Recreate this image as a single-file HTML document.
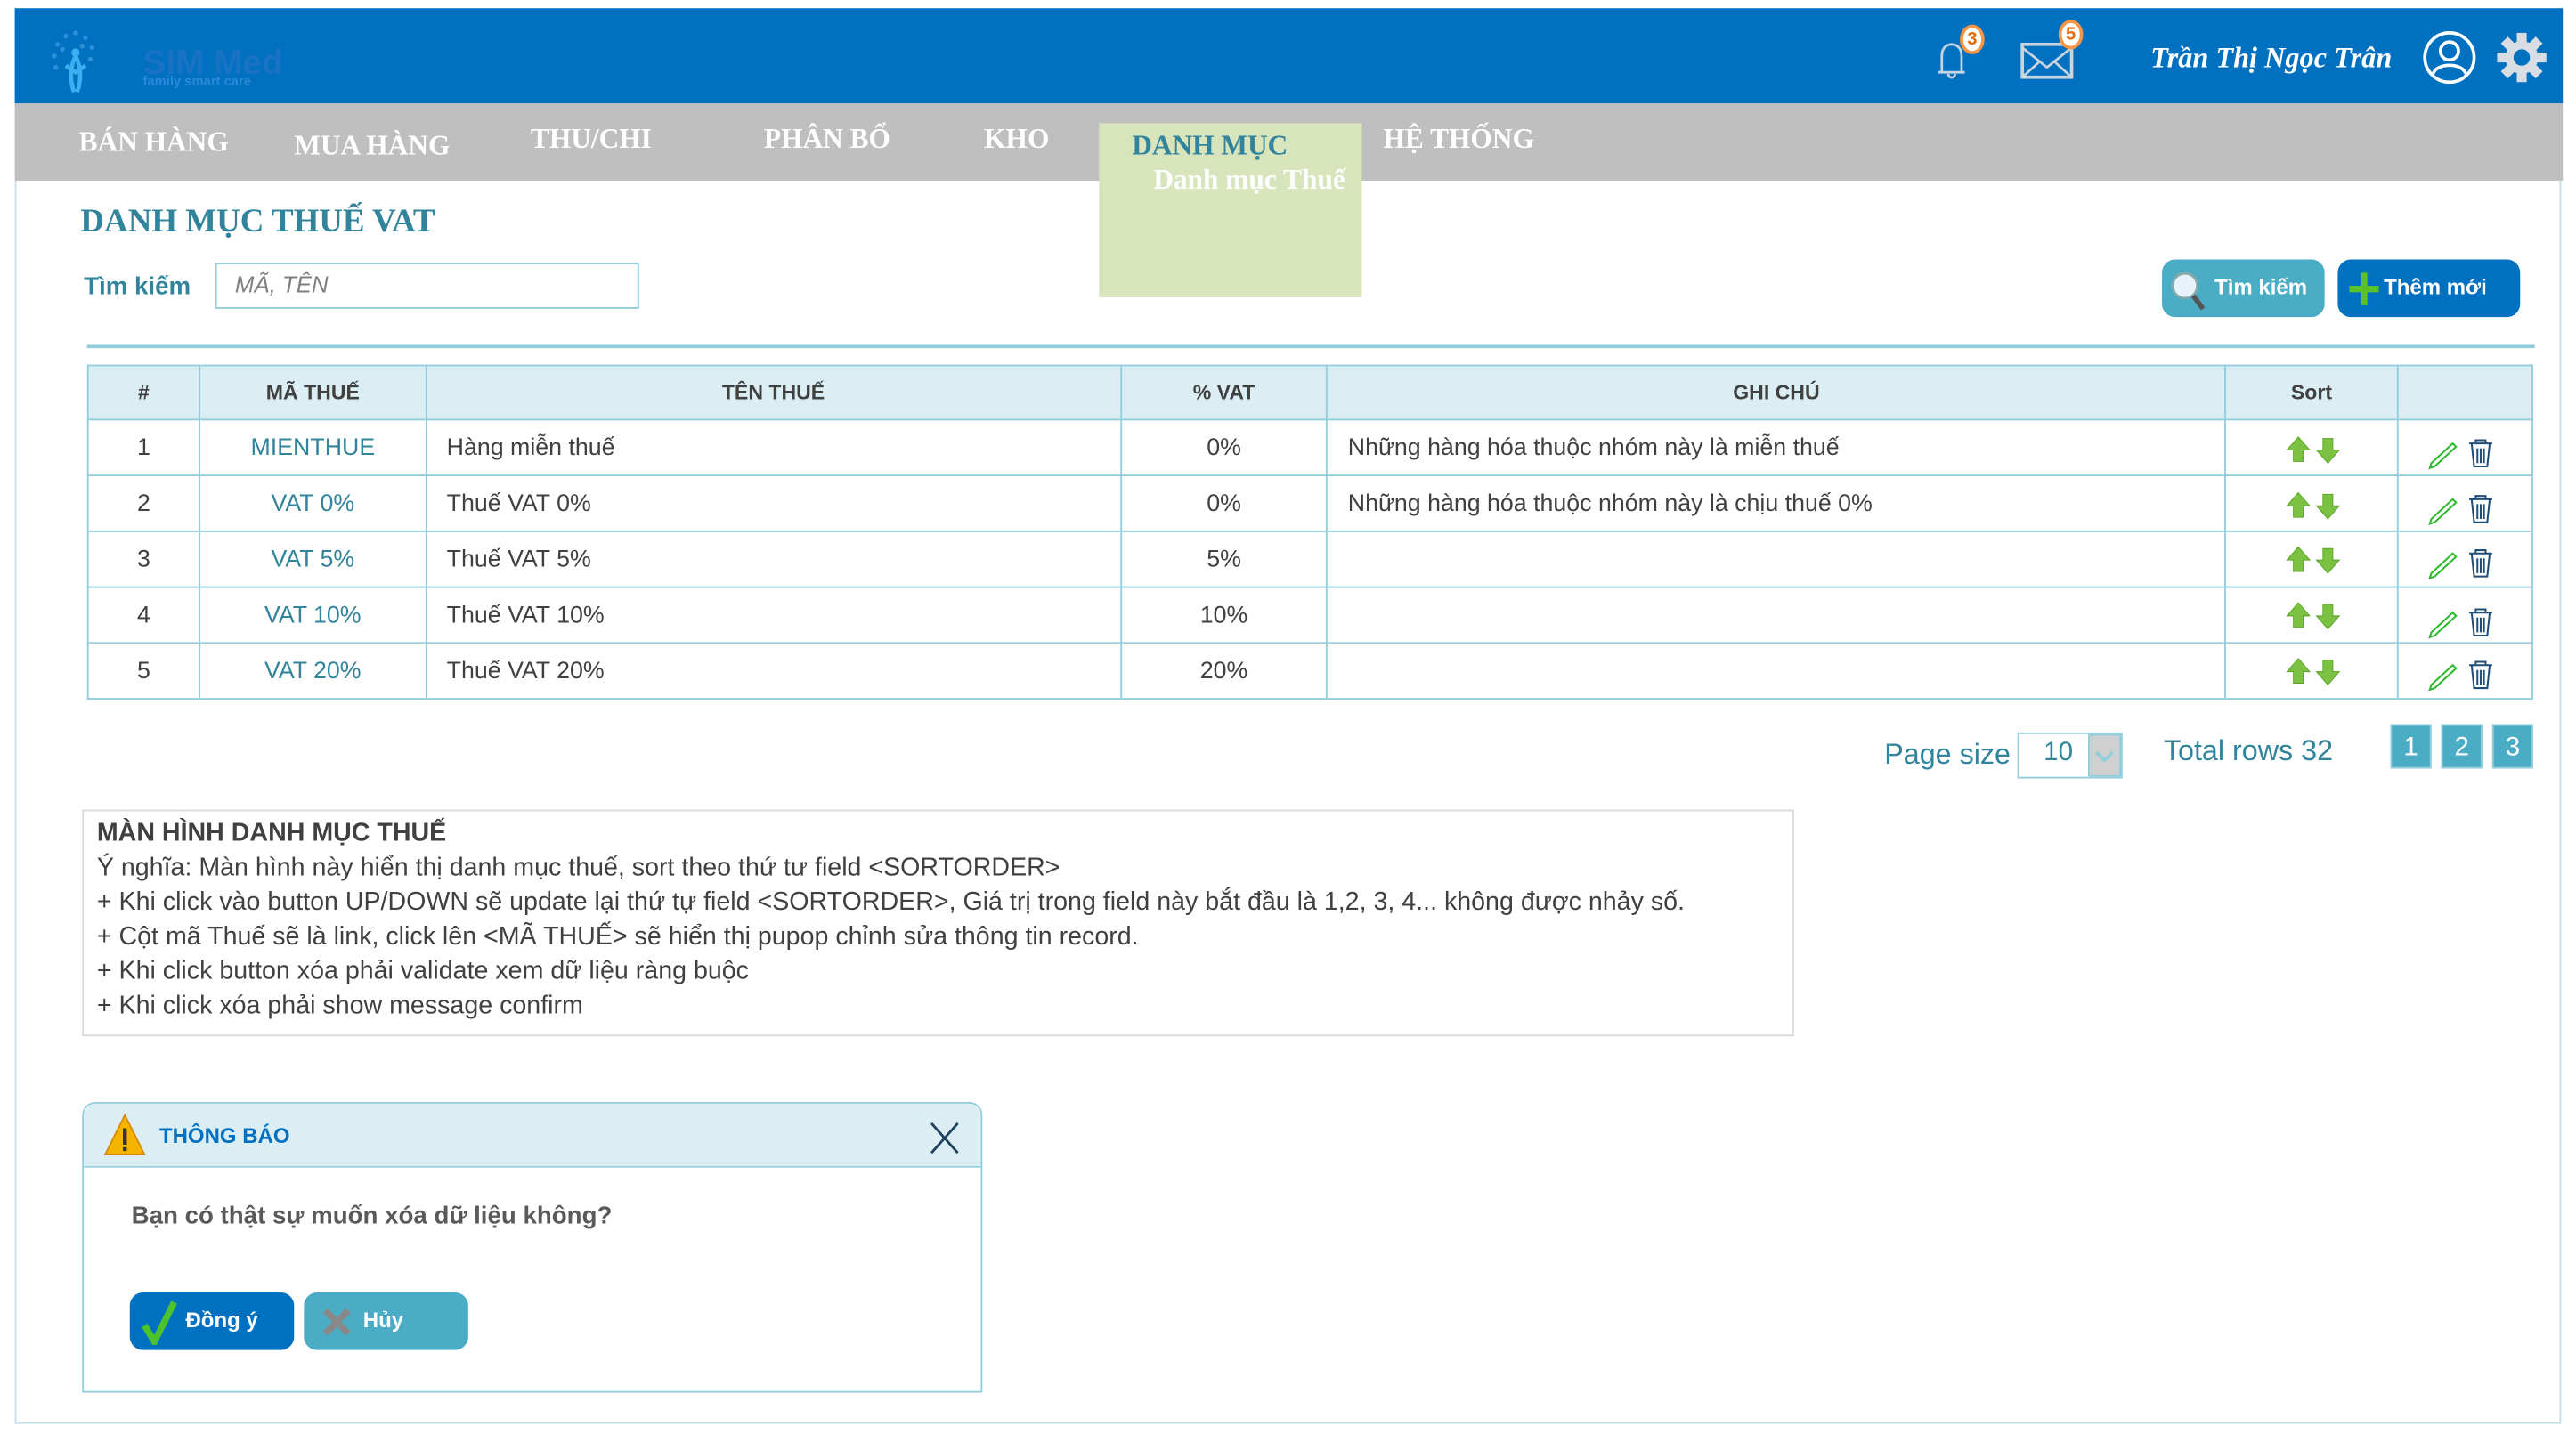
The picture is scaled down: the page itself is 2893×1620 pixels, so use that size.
<!DOCTYPE html>
<html><head><meta charset="utf-8"><style>
*{margin:0;padding:0;box-sizing:border-box}
html,body{width:2893px;height:1620px;overflow:hidden;background:#fff}
#w{position:absolute;left:0;top:0;width:1568px;height:878px;transform:scale(1.845);transform-origin:0 0;font-family:"Liberation Sans","DejaVu Sans",sans-serif}
.a{position:absolute;white-space:nowrap}
.nav{font-family:"Liberation Serif",serif;font-weight:bold;font-size:17px;color:#fff}
table{border-collapse:collapse;position:absolute;left:53px;top:222px;width:1489px;font-size:14.5px;color:#404040}
td,th{border:1px solid #92cddc;height:34px;padding:0 12px}
th{background:#daeef3;height:33px;font-size:12.5px;color:#404040;font-weight:bold;text-align:center}
.c{text-align:center}.lk{color:#31849b;text-align:center}
.btn{position:absolute;border-radius:8px;color:#fff;font-weight:bold;font-size:13px}
.note{font-size:15.5px;color:#404040;line-height:21px}
.pg{position:absolute;top:441px;width:25px;height:27px;background:#4bacc6;color:#fff;font-size:16px;text-align:center;line-height:27px;border:1px solid #92cddc}
</style></head><body><div id="w">
<div class="a" style="left:9px;top:5px;width:1550px;height:862px;border:1px solid #c8dfe6;border-top:none"></div>
<div class="a" style="left:9px;top:5px;width:1551px;height:58px;background:#0070c0"></div>
<div class="a" style="left:9px;top:63px;width:1551px;height:47px;background:#bfbfbf"></div>
<svg class="a" style="left:26px;top:12px" width="60" height="46" viewBox="0 0 60 46"><g fill="#2b8fd8"><circle cx="9" cy="15" r="1.5"/><circle cx="14" cy="10" r="1.5"/><circle cx="20" cy="8" r="1.5"/><circle cx="26" cy="11" r="1.5"/><circle cx="7" cy="22" r="1.5"/><circle cx="30" cy="17" r="1.5"/><circle cx="12" cy="18" r="1.5"/><circle cx="24" cy="16" r="1.5"/><circle cx="29" cy="24" r="1.5"/><circle cx="8" cy="29" r="1.5"/></g><path d="M20 22 C16 30 17 38 19 44 M20 22 C24 30 23 38 21 44 M14 28 L20 32 L26 28" stroke="#3ab0f0" stroke-width="2.5" fill="none"/><circle cx="20" cy="20" r="2.5" fill="#3ab0f0"/></svg>
<div class="a" style="left:87px;top:27px;font-size:21px;font-weight:bold;color:#1a72c4">SIM Med</div>
<div class="a" style="left:87px;top:45px;font-size:8px;font-weight:bold;color:#2a8ad8">family smart care</div>
<svg class="a" style="left:1178px;top:22px" width="24" height="28" viewBox="0 0 24 28"><path d="M4 22 L4 12 C4 7 7 5 10 5 C13 5 16 7 16 12 L16 22 Z M2 22 L18 22 M8 23 C8 26 12 26 12 23" stroke="#c8d4e0" stroke-width="1.5" fill="none"/></svg>
<div class="a" style="left:1193px;top:15px;width:15px;height:18px;border-radius:50%;background:#fff;border:2px solid #f79646;color:#e46c0a;font-size:11px;font-weight:bold;text-align:center;line-height:14px">3</div>
<svg class="a" style="left:1229px;top:25px" width="36" height="24" viewBox="0 0 36 24"><rect x="2" y="2" width="30" height="20" stroke="#c8d4e0" stroke-width="2" fill="none"/><path d="M2 4 L17 16 L32 4 M2 22 L13 12 M32 22 L21 12" stroke="#c8d4e0" stroke-width="1.5" fill="none"/></svg>
<div class="a" style="left:1253px;top:12px;width:15px;height:18px;border-radius:50%;background:#fff;border:2px solid #f79646;color:#e46c0a;font-size:11px;font-weight:bold;text-align:center;line-height:14px">5</div>
<div class="a" style="left:1309px;top:25px;font-family:'Liberation Serif',serif;font-style:italic;font-weight:bold;font-size:17.5px;color:#fff">Trần Thị Ngọc Trân</div>
<svg class="a" style="left:1474px;top:18px" width="34" height="34" viewBox="0 0 34 34"><circle cx="17" cy="17" r="15" stroke="#fff" stroke-width="2" fill="none"/><circle cx="17" cy="13" r="5.5" stroke="#fff" stroke-width="2" fill="none"/><path d="M7 27 C9 20 25 20 27 27" stroke="#fff" stroke-width="2" fill="none"/></svg>
<svg class="a" style="left:1519px;top:19px" width="32" height="32" viewBox="-16 -16 32 32"><g fill="#d8dde3"><circle r="10"/><g id="t"><rect x="-3" y="-15" width="6" height="8"/></g><use href="#t" transform="rotate(45)"/><use href="#t" transform="rotate(90)"/><use href="#t" transform="rotate(135)"/><use href="#t" transform="rotate(180)"/><use href="#t" transform="rotate(225)"/><use href="#t" transform="rotate(270)"/><use href="#t" transform="rotate(315)"/></g><circle r="5" fill="#0070c0"/></svg>
<div class="a nav" style="left:48px;top:77px">BÁN HÀNG</div>
<div class="a nav" style="left:179px;top:79px">MUA HÀNG</div>
<div class="a nav" style="left:323px;top:75px">THU/CHI</div>
<div class="a nav" style="left:465px;top:75px">PHÂN BỔ</div>
<div class="a nav" style="left:599px;top:75px">KHO</div>
<div class="a" style="left:669px;top:75px;width:160px;height:106px;background:#d8e4bc"></div>
<div class="a nav" style="left:689px;top:79px;color:#31849b">DANH MỤC</div>
<div class="a nav" style="left:702px;top:100px">Danh mục Thuế</div>
<div class="a nav" style="left:842px;top:75px">HỆ THỐNG</div>
<div class="a" style="left:49px;top:124px;font-family:'Liberation Serif',serif;font-weight:bold;font-size:20px;color:#31849b">DANH MỤC THUẾ VAT</div>
<div class="a" style="left:51px;top:166px;font-size:15px;font-weight:bold;color:#31849b">Tìm kiếm</div>
<div class="a" style="left:131px;top:160px;width:258px;height:28px;border:1px solid #92cddc"></div>
<div class="a" style="left:143px;top:165px;font-size:14px;font-style:italic;color:#808080">MÃ, TÊN</div>
<div class="btn" style="left:1316px;top:158px;width:99px;height:35px;background:#4bacc6"><svg class="a" style="left:4px;top:6px" width="24" height="26" viewBox="0 0 24 26"><circle cx="10" cy="10" r="7.5" fill="#e8f2fb" stroke="#8aa" stroke-width="1.5"/><path d="M15 16 L21 24" stroke="#555" stroke-width="3"/></svg><span class="a" style="left:32px;top:9px">Tìm kiếm</span></div>
<div class="btn" style="left:1423px;top:158px;width:111px;height:35px;background:#0070c0"><svg class="a" style="left:7px;top:8px" width="18" height="20" viewBox="0 0 18 20"><path d="M7 0h4v8h7v4h-7v8h-4v-8h-7v-4h7z" fill="#5cc02a"/></svg><span class="a" style="left:28px;top:9px">Thêm mới</span></div>
<div class="a" style="left:53px;top:210px;width:1490px;height:2px;background:#92cddc"></div>
<table>
<tr><th style="width:68px">#</th><th style="width:138px">MÃ THUẾ</th><th style="width:423px">TÊN THUẾ</th><th style="width:126px">% VAT</th><th style="width:547px">GHI CHÚ</th><th style="width:105px">Sort</th><th style="width:82px"></th></tr>
<tr><td class="c">1</td><td class="lk">MIENTHUE</td><td>Hàng miễn thuế</td><td class="c">0%</td><td>Những hàng hóa thuộc nhóm này là miễn thuế</td><td></td><td></td></tr>
<tr><td class="c">2</td><td class="lk">VAT 0%</td><td>Thuế VAT 0%</td><td class="c">0%</td><td>Những hàng hóa thuộc nhóm này là chịu thuế 0%</td><td></td><td></td></tr>
<tr><td class="c">3</td><td class="lk">VAT 5%</td><td>Thuế VAT 5%</td><td class="c">5%</td><td></td><td></td><td></td></tr>
<tr><td class="c">4</td><td class="lk">VAT 10%</td><td>Thuế VAT 10%</td><td class="c">10%</td><td></td><td></td><td></td></tr>
<tr><td class="c">5</td><td class="lk">VAT 20%</td><td>Thuế VAT 20%</td><td class="c">20%</td><td></td><td></td><td></td></tr>
</table>
<svg class="a" style="left:1390px;top:262px" width="150" height="160" viewBox="0 0 150 160">
<defs><g id="ud"><path d="M9 0 L16 8 L12 8 L12 15 L6 15 L6 8 L2 8 Z" fill="#7cc242" stroke="#5aa028" stroke-width="0.5"/><path d="M27 16 L34 8 L30 8 L30 1 L24 1 L24 8 L20 8 Z" fill="#7cc242" stroke="#5aa028" stroke-width="0.5"/></g>
<g id="ed"><path d="M90 17 L103 5 L105 7 L92 19 L89 20 Z" fill="none" stroke="#2cb82c" stroke-width="1.1"/><path d="M113 5 h14 M117 5 v-2 h6 v2 M114.5 5 l1.5 14 h8 l1.5 -14 M118 8 v9 M120 8 v9 M122 8 v9" fill="none" stroke="#1f4e79" stroke-width="1.1"/></g></defs>
<use href="#ud" y="4"/><use href="#ed" y="3"/>
<use href="#ud" y="38"/><use href="#ed" y="37"/>
<use href="#ud" y="71"/><use href="#ed" y="70"/>
<use href="#ud" y="105"/><use href="#ed" y="106"/>
<use href="#ud" y="139"/><use href="#ed" y="138"/>
</svg>
<div class="a" style="left:1147px;top:449px;font-size:17.5px;color:#31849b">Page size</div>
<div class="a" style="left:1228px;top:446px;width:64px;height:28px;border:1px solid #92cddc"></div>
<div class="a" style="left:1244px;top:450px;font-size:16px;color:#31849b">10</div>
<div class="a" style="left:1271px;top:447px;width:20px;height:26px;background:#d0d0d0;border:1px solid #92cddc"><svg width="18" height="24"><path d="M4 10 L9 15 L14 10" stroke="#92cddc" stroke-width="2" fill="none"/></svg></div>
<div class="a" style="left:1317px;top:447px;font-size:17.5px;color:#31849b">Total rows 32</div>
<div class="pg" style="left:1455px">1</div><div class="pg" style="left:1486px">2</div><div class="pg" style="left:1517px">3</div>
<div class="a" style="left:50px;top:493px;width:1042px;height:138px;border:1px solid #d9d9d9"></div>
<div class="a note" style="left:59px;top:497px"><b>MÀN HÌNH DANH MỤC THUẾ</b><br>Ý nghĩa: Màn hình này hiển thị danh mục thuế, sort theo thứ tư field &lt;SORTORDER&gt;<br>+ Khi click vào button UP/DOWN sẽ update lại thứ tự field &lt;SORTORDER&gt;, Giá trị trong field này bắt đầu là 1,2, 3, 4... không được nhảy số.<br>+ Cột mã Thuế sẽ là link, click lên &lt;MÃ THUẾ&gt; sẽ hiển thị pupop chỉnh sửa thông tin record.<br>+ Khi click button xóa phải validate xem dữ liệu ràng buộc<br>+ Khi click xóa phải show message confirm</div>
<div class="a" style="left:50px;top:671px;width:548px;height:177px;border:1px solid #92cddc;border-radius:8px 8px 0 0"></div>
<div class="a" style="left:51px;top:672px;width:546px;height:39px;background:#daeef3;border-bottom:1px solid #92cddc;border-radius:8px 8px 0 0"></div>
<svg class="a" style="left:62px;top:677px" width="28" height="28" viewBox="0 0 28 28"><path d="M14 2 L26 26 L2 26 Z" fill="#f5b400" stroke="#d98a00"/><rect x="12.8" y="10" width="2.4" height="10" fill="#333"/><rect x="12.8" y="21.5" width="2.4" height="2.4" fill="#333"/></svg>
<div class="a" style="left:97px;top:684px;font-size:13px;font-weight:bold;color:#0070c0">THÔNG BÁO</div>
<svg class="a" style="left:565px;top:682px" width="20" height="22"><path d="M2 2 L18 20 M18 2 L2 20" stroke="#1f3f5f" stroke-width="1.5"/></svg>
<div class="a" style="left:80px;top:732px;font-size:15px;font-weight:bold;color:#595959">Bạn có thật sự muốn xóa dữ liệu không?</div>
<div class="btn" style="left:79px;top:787px;width:100px;height:35px;background:#0070c0"><svg class="a" style="left:7px;top:4px" width="22" height="28"><path d="M2 16 L8 26 L20 2" stroke="#4cc22c" stroke-width="4" fill="none"/></svg><span class="a" style="left:34px;top:9px">Đồng ý</span></div>
<div class="btn" style="left:185px;top:787px;width:100px;height:35px;background:#4bacc6"><svg class="a" style="left:10px;top:8px" width="20" height="20"><path d="M3 3 L17 17 M17 3 L3 17" stroke="#888" stroke-width="4"/></svg><span class="a" style="left:36px;top:9px">Hủy</span></div>
</div></body></html>
